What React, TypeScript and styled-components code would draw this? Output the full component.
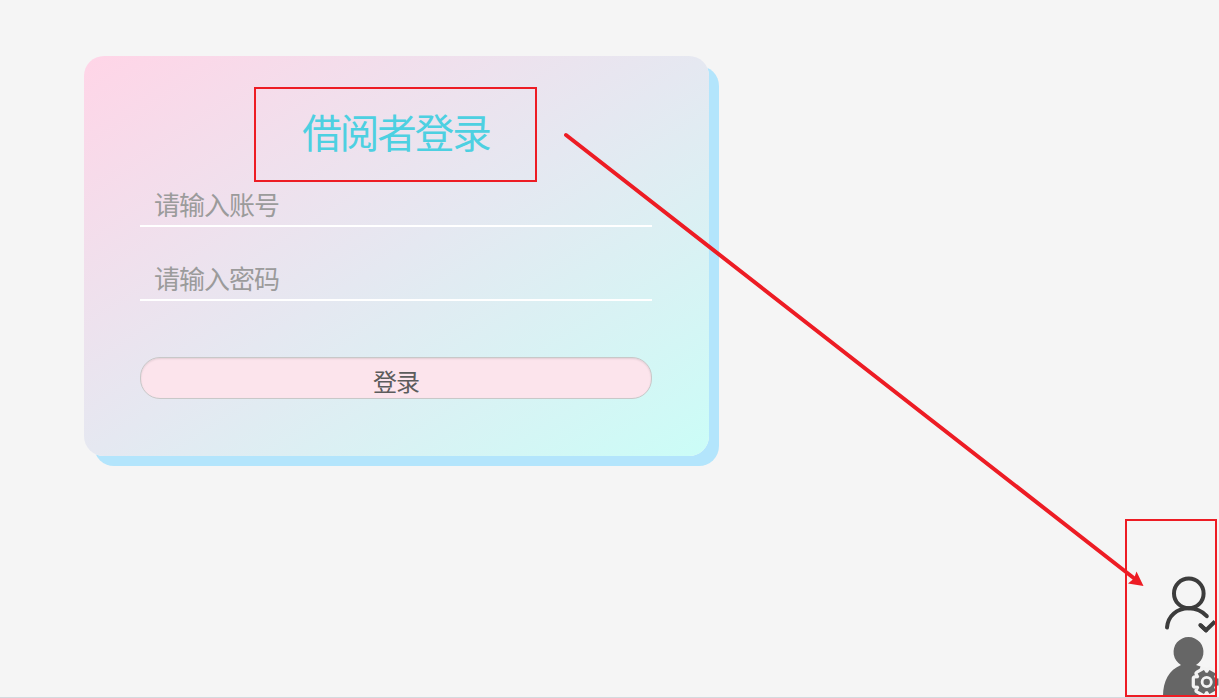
import React from 'react';
import styled, { createGlobalStyle } from 'styled-components';

const GlobalStyle = createGlobalStyle`
    * {
        box-sizing: border-box;
    }

    body {
        margin: 0;
        overflow: hidden;
        background: #f5f5f5;
        font-family: 'Noto Sans CJK SC', sans-serif;
    }
`;

const Page = styled.main`
    position: relative;
    width: 1219px;
    height: 698px;
    padding: 56px 0 0 84px;
    border-bottom: 1px solid #d3dade;
    overflow: hidden;
`;

const Card = styled.form`
    display: flex;
    flex-direction: column;
    width: 625px;
    height: 400px;
    padding: 45px 57px 0 56px;
    border-radius: 20px;
    background: linear-gradient(to bottom right, #ffd5e7, #e5e8f1, #cbfdf7);
    box-shadow: 10px 10px 0 #b3e5fc;
`;

const Title = styled.h1`
    margin: 0 0 24px;
    height: 60px;
    color: #4dd0e1;
    font-size: 39.5px;
    font-weight: 400;
    line-height: 60px;
    letter-spacing: -2px;
    text-align: center;
`;

const Field = styled.input`
    height: 42px;
    margin-bottom: 32px;
    padding: 0 14px 4px;
    border: none;
    border-bottom: 2px solid #fff;
    outline: none;
    background: transparent;
    font-family: inherit;
    font-size: 26px;
    letter-spacing: -1px;

    &::placeholder {
        color: #9b9b9b;
        opacity: 1;
    }
`;

const Submit = styled.button`
    height: 42px;
    margin-top: 24px;
    padding: 5px 0 0;
    border: 1px solid #c8c8c8;
    border-radius: 20px;
    background: #fce4ec;
    box-shadow: inset 0 1px 2px rgba(0, 0, 0, 0.1);
    color: #5c5c5c;
    font-family: inherit;
    font-size: 24px;
    line-height: 32px;
    letter-spacing: -1px;
`;

const Overlay = styled.svg`
    position: absolute;
    top: 0;
    left: 0;
    pointer-events: none;
`;

// six teeth, each one given as [radius, offset in degrees]
const tooth = [[9.2, -24], [12.3, -17], [12.3, 17], [9.2, 24]];
const gearPoints = [0, 60, 120, 180, 240, 300].flatMap((base) => {
    return tooth.map(([radius, offset]) => {
        const angle = (base + offset) * Math.PI / 180;
        return `${(radius * Math.cos(angle)).toFixed(2)},${(radius * Math.sin(angle)).toFixed(2)}`;
    });
}).join(' ');

const UserCheck = () => (
    <g fill='none' stroke='#3c3c3c' strokeWidth='4' strokeLinecap='round' strokeLinejoin='round'>
        <circle cx='1188.8' cy='593.4' r='14.8' />
        <path d='M1167 627.5C1168 615.5 1177 608.3 1188.8 608.3C1196 608.3 1202 611 1206.8 616.2' />
        <path d='M1200.3 625L1206 630.3L1215 621.5' strokeLinecap='butt' />
        <path d='M1200.3 625L1206 630.3' />
    </g>
);

const UserSettings = () => (
    <g fill='#666'>
        <path d='M1163 696C1163 681 1169 670 1181 665A15 15 0 1 1 1196 665L1200.5 666.5L1199 671L1206 674V696Z' />
        <g transform='translate(1206.7 682)'>
            <polygon
                points={gearPoints}
                stroke='#f3f3f3'
                strokeWidth='6.5'
                strokeLinejoin='round'
                paintOrder='stroke'
            />
            <circle r='4.6' stroke='#f3f3f3' strokeWidth='2.8' />
        </g>
    </g>
);

const App = () => {
    return (
        <>
            <GlobalStyle />
            <Page>
                <Card>
                    <Title>借阅者登录</Title>
                    <Field placeholder='请输入账号' />
                    <Field type='password' placeholder='请输入密码' />
                    <Submit type='button'>登录</Submit>
                </Card>
                <Overlay width='1219' height='698' viewBox='0 0 1219 698'>
                    <UserCheck />
                    <UserSettings />
                    <g fill='none' stroke='#ed1c24' strokeWidth='2'>
                        <rect x='255' y='88' width='281' height='93' />
                        <rect x='1126' y='520' width='90' height='176' />
                    </g>
                    <path d='M566 135L1135 579' stroke='#ed1c24' strokeWidth='4' strokeLinecap='round' />
                    <path d='M1143.5 586L1128 583.5L1134 578.5L1136.5 571.5Z' fill='#ed1c24' />
                </Overlay>
            </Page>
        </>
    );
};

export default App;
